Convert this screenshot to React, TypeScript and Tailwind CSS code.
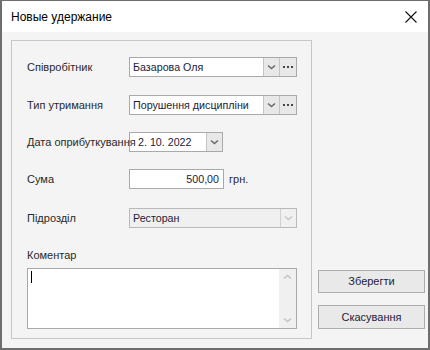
import React from 'react';

const font = { fontFamily: '"Liberation Sans", Arial, sans-serif' };

function Chevron({ color = '#6b6b6b', up = false }: { color?: string; up?: boolean }) {
  return (
    <svg width="9" height="6" viewBox="0 0 9 6" className={up ? 'rotate-180' : ''}>
      <path d="M1 1.5 L4.5 4.5 L8 1.5" fill="none" stroke={color} strokeWidth="1.6" />
    </svg>
  );
}

function Dots() {
  return (
    <div className="flex w-[17px] items-center justify-center gap-[2px] border-l border-[#c4c4c4] bg-[#e8e8e8]">
      <span className="h-[2px] w-[2px] bg-[#444]" />
      <span className="h-[2px] w-[2px] bg-[#444]" />
      <span className="h-[2px] w-[2px] bg-[#444]" />
    </div>
  );
}

function Combo({ value, dots, disabled, width }: { value: string; dots?: boolean; disabled?: boolean; width: string }) {
  return (
    <div className={`flex h-[20px] ${width} border ${disabled ? 'border-[#b9b9b9] bg-[#f0f0f0]' : 'border-[#a9a9a9] bg-white'}`}>
      <div className="flex flex-1 items-center pl-[3px] text-[10.7px] text-[#1c1c3a]">{value}</div>
      <div className={`flex w-[16px] items-center justify-center border-l ${disabled ? 'border-[#d0d0d0] bg-[#f0f0f0]' : 'border-[#c4c4c4] bg-[#e8e8e8]'}`}>
        <Chevron color={disabled ? '#c8c8c8' : '#6b6b6b'} />
      </div>
      {dots && <Dots />}
    </div>
  );
}

function Row({ label, children, mt }: { label: string; children: React.ReactNode; mt: string }) {
  return (
    <div className={`flex h-[20px] items-center ${mt}`}>
      <div className="relative z-10 w-[102px] shrink-0 whitespace-nowrap text-[11px] text-[#2a2a2a]">{label}</div>
      {children}
    </div>
  );
}

export default function App() {
  return (
    <div className="flex h-[350px] w-[430px] flex-col border-x-2 border-b-2 border-t border-[#6e6e6e] bg-white" style={font}>
      <div className="flex h-[31px] items-center justify-between pl-[9px] pr-[11px]">
        <span className="text-[12px] text-black">Новые удержание</span>
        <svg width="12" height="12" viewBox="0 0 12 12">
          <path d="M0.5 0.5 L11.5 11.5 M11.5 0.5 L0.5 11.5" stroke="#111" strokeWidth="1.1" />
        </svg>
      </div>
      <div className="flex flex-1 bg-[#f4f4f4] pb-[9px] pl-[9px] pr-[3px] pt-[8px]">
        <div className="flex w-[302px] flex-col border border-[#c7c7c7] pl-[15px] pt-[16px]">
          <Row label="Співробітник" mt="mt-0">
            <Combo value="Базарова Оля" dots width="w-[168px]" />
          </Row>
          <Row label="Тип утримання" mt="mt-[18px]">
            <Combo value="Порушення дисципліни" dots width="w-[168px]" />
          </Row>
          <Row label="Дата оприбуткування" mt="mt-[17px]">
            <div className="flex h-[20px] w-[94px] border border-[#a9a9a9] bg-white">
              <div className="flex flex-1 items-center pl-[8px] text-[10.7px] text-[#1c1c3a]">2. 10. 2022</div>
              <div className="flex w-[16px] items-center justify-center border-l border-[#c4c4c4] bg-[#e8e8e8]">
                <Chevron />
              </div>
            </div>
          </Row>
          <Row label="Сума" mt="mt-[17px]">
            <div className="flex h-[20px] w-[95px] items-center justify-end border border-[#a9a9a9] bg-white pr-[4px] text-[10.7px] text-[#1c1c3a]">
              500,00
            </div>
            <span className="ml-[5px] text-[11px] text-[#2a2a2a]">грн.</span>
          </Row>
          <Row label="Підрозділ" mt="mt-[19px]">
            <Combo value="Ресторан" disabled width="w-[168px]" />
          </Row>
          <div className="mt-[20px] text-[11px] leading-[14px] text-[#2a2a2a]">Коментар</div>
          <div className="mt-[6px] flex h-[61px] w-[270px] border border-[#a9a9a9] bg-white">
            <div className="flex-1 pl-[3px] pt-[2px]">
              <div className="h-[12px] w-[1px] bg-black" />
            </div>
            <div className="flex w-[17px] flex-col items-center justify-between bg-[#f0f0f0] py-[5px]">
              <Chevron color="#c4c4c4" up />
              <Chevron color="#c4c4c4" />
            </div>
          </div>
        </div>
        <div className="ml-[6px] flex flex-1 flex-col justify-end gap-[12px] pb-[10px]">
          <button className="h-[23px] w-[107px] border border-[#adadad] bg-[#e9e9e9] text-[11px] text-[#1c1c3a]">Зберегти</button>
          <button className="h-[24px] w-[107px] border border-[#adadad] bg-[#e9e9e9] text-[11px] text-[#1c1c3a]">Скасування</button>
        </div>
      </div>
    </div>
  );
}
